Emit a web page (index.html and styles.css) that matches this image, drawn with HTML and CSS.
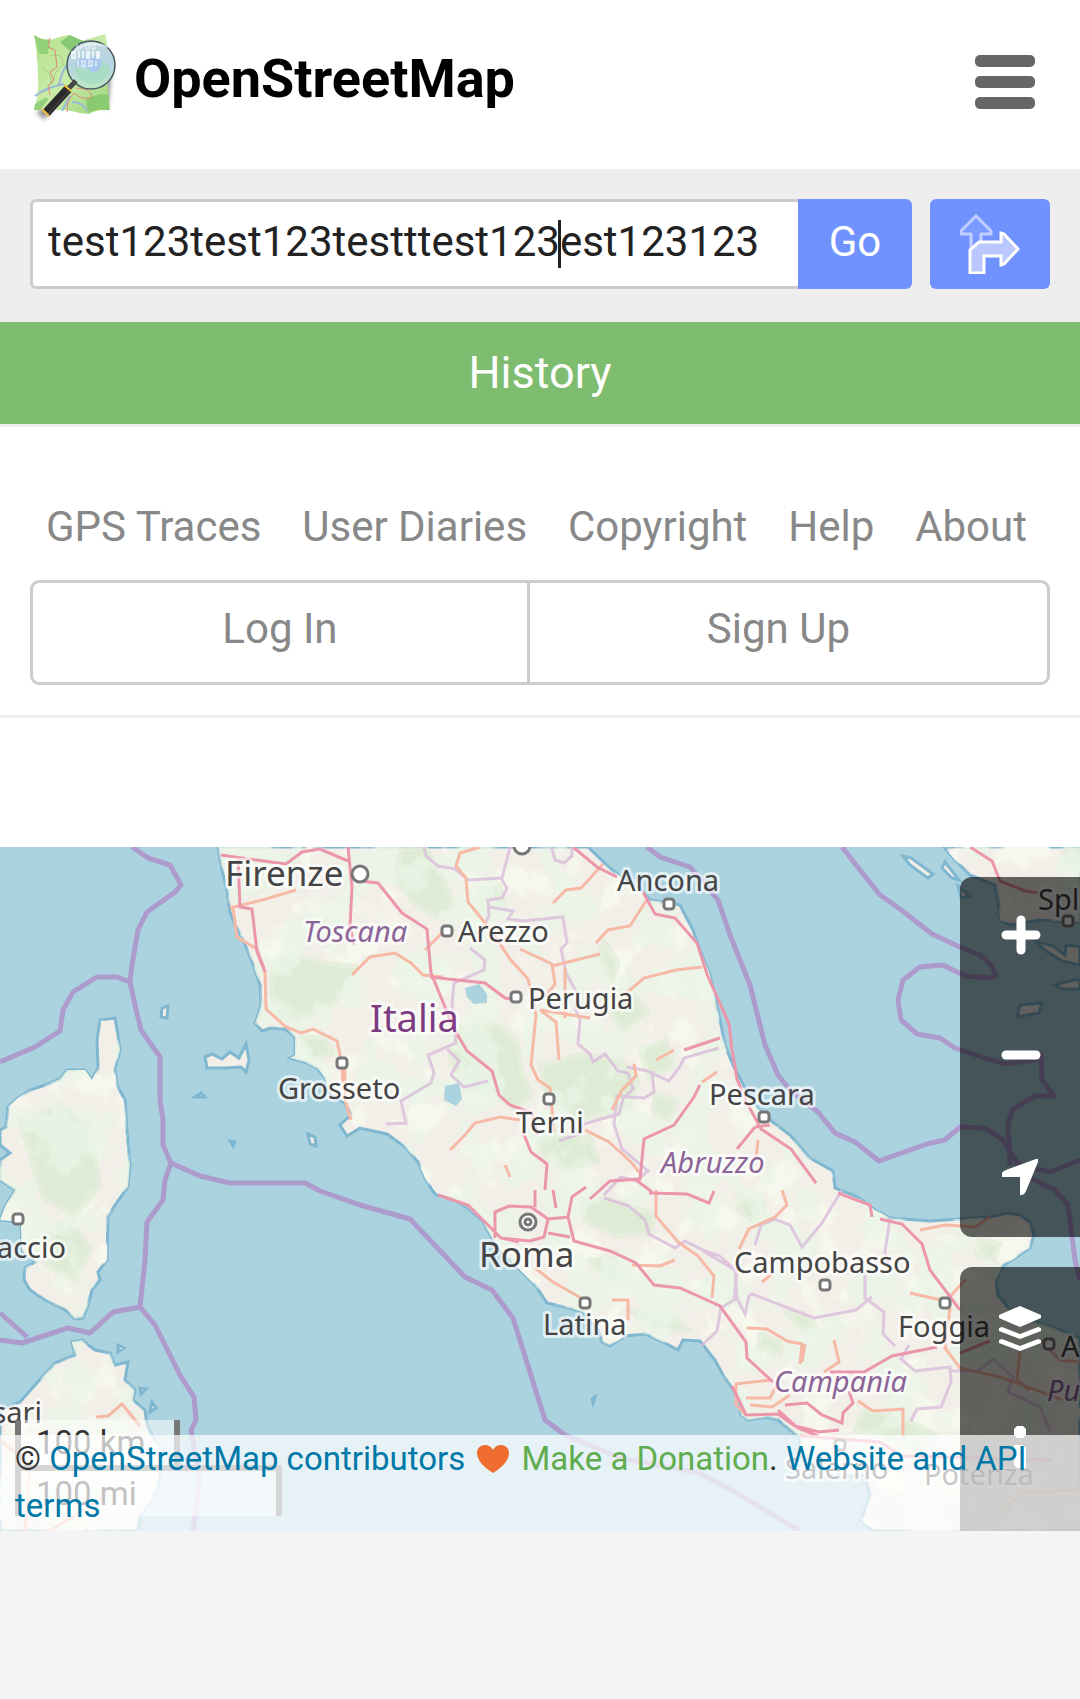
FILE: index.html
```html
<!DOCTYPE html>
<html lang="en">
<head>
<meta charset="utf-8">
<meta name="viewport" content="width=device-width">
<title>OpenStreetMap</title>
<link rel="stylesheet" href="styles.css">
</head>
<body>
<header class="header">
  <h1 class="brand"><a class="brand-link" href="#">
    <svg class="logo" viewBox="0 0 90 92" aria-hidden="true">
      <defs>
        <linearGradient id="paper" x1="0" y1="0" x2="1" y2="1"><stop offset="0" stop-color="#b4e28c"/><stop offset=".5" stop-color="#c9eba8"/><stop offset="1" stop-color="#9bd377"/></linearGradient>
        <linearGradient id="lens" x1="0" y1="0" x2="0" y2="1"><stop offset="0" stop-color="#c3d9dd"/><stop offset=".5" stop-color="#b5d4e4"/><stop offset="1" stop-color="#bde8c0"/></linearGradient>
        <filter id="soft"><feGaussianBlur stdDeviation="2"/></filter>
      </defs>
      <path d="M6 80l8 8 30-34 34 24 4-40z" fill="#000" opacity=".4" filter="url(#soft)"/>
      <path d="M4 3q11 7 20 4 10-4 16-4 10 8 18 4l17-5q5 20 3 38-1 20 2 38-12-1-21 4-12-1-22-4-18 0-33-1 5-14 4-28 0-14-1-22-1-15-3-24z" fill="url(#paper)"/>
      <path d="M30 10l10-7 13 6-10 13z" fill="#86c873"/>
      <path d="M4 3q9 6 16 4l-2 15H9zM5 72q14-10 13-4l-8 10H4z" fill="#94d07a"/>
      <path d="M56 68q12-8 23-5v15q-14-2-21 3z" fill="#8acb70"/>
      <path d="M20 24q14-4 13 9-9 5-11 20m32-35q8 8 7 14M12 35q12 8 8 18" fill="none" stroke="#a3cf83"/>
      <path d="M29 53q4-18 9-20M5 64q12-9 29-12m8 18q11 0 15 9M40 64l-8 15" fill="none" stroke="#98b9dd" stroke-width="2"/>
      <path d="M20 6l-2 9 7 3 2 17-7 5 4 8-6 6 2 9M46 56q15 0 16 9-9 4-18-4l-6 8-1 11" fill="none" stroke="#dc8877" stroke-width="1"/>
      <circle cx="61" cy="33" r="24" fill="url(#lens)" stroke="#4c5961" stroke-width="1.5"/>
      <path d="M44 33q10 8 16 2 6-7 12-6 9 2 8 11-8 15-23 11-11-4-13-18z" fill="#a6dcc0" opacity=".8"/>
      <path d="M45 34q4-10 13-8 10-5 14 4-2 11-10 10-7-9-17-6z" fill="#a9c8ee"/>
      <path d="M42 23q12-17 36-8" fill="none" stroke="#e8f4f5" stroke-width="2" opacity=".7"/>
      <g fill="none" stroke="#fff" stroke-width="1.5"><path d="M47 17v-5M51 17v-5M56 12h3v5h-3zM62 12h3v5h-3z" opacity=".5"/><path d="M42 20h3v6h-3zM49 19v7M53 19v7M57 20h2v6h-2zM63 19v7M67 20h2v6h-2z" opacity=".95"/><path d="M48 29v5M52 29h3v5h-3zM59 29h3v5h-3zM66 29v5" opacity=".65"/></g>
      <path d="M46 49l-8 8" stroke="#464646" stroke-width="5"/>
      <path d="M38 57L16 81" stroke="#2b292a" stroke-width="9"/>
      <path d="M39 59L18 82" stroke="#555" stroke-width="1"/>
      <path d="M34 53l7 6M12 77l7 7" stroke="#f3bd36" stroke-width="2"/>
    </svg>
    <span>OpenStreetMap</span>
  </a></h1>
  <button class="menu-button" type="button" aria-label="Menu"><span></span><span></span><span></span></button>
</header>

<form class="search-bar">
  <div class="search-group">
    <div class="search-field">
      <input class="search-input" type="text" aria-label="Search" value="test123test123testttest123est123123">
      <span class="caret"></span>
    </div>
    <button class="go-button" type="button">Go</button>
  </div>
  <button class="directions-button" type="button" aria-label="Directions">
    <svg viewBox="0 0 60 60" aria-hidden="true">
      <path d="M11 36V20H1v-3L16 2l15 15v3H21v11" fill="#fff" fill-opacity=".08" stroke="#c1ceff" stroke-width="3"/>
      <path d="M10 59V36l9-8h22V19l3 1 14 15-14 15-3 1V42H24v17z" fill="#bac8ff" stroke="#fff" stroke-width="3"/>
    </svg>
  </button>
</form>

<nav class="primary-nav"><a href="#">History</a></nav>

<nav class="secondary-nav">
  <div class="nav-links">
    <a href="#">GPS Traces</a><a href="#">User Diaries</a><a href="#">Copyright</a><a href="#">Help</a><a href="#">About</a>
  </div>
  <div class="account"><a class="login" href="#">Log In</a><a class="signup" href="#">Sign Up</a></div>
</nav>

<main class="map">
  <svg class="map-canvas" viewBox="0 847 1080 684" role="img" aria-label="Map of central Italy">
    <defs>
      <path id="mainland" d="M218 847L222 870 227 890 230 912 235 925 243 940 252 962 260 985 261 1005 258 1015 255 1023 262 1031 270 1028 285 1029 295 1037V1055L290 1058 305 1062 318 1069 325 1078 330 1095 345 1103 351 1115 340 1125 347 1136 360 1128 387 1134 405 1147 418 1162 425 1178 432 1190 436 1195 455 1200 470 1210 482 1220 490 1235 500 1250 520 1270 535 1285 547 1303 565 1307 582 1312 598 1330 602 1342 610 1346 625 1336 645 1334 665 1343 678 1350 683 1340 700 1341 715 1360 722 1373 730 1385 740 1400 741 1415 748 1420 765 1417 778 1420 790 1430 800 1437 800 1455 830 1475 865 1475 870 1495 861 1520 872 1531H1080V1338L1060 1330 1030 1320 1010 1310 998 1295 996 1280 1003 1266 1030 1248 1034 1235 1030 1222 1020 1215 1008 1213 990 1217 960 1219 930 1221 890 1218 875 1210 858 1197 835 1188 833 1171 810 1158 790 1135 770 1120 757 1108 744 1086 733 1065 725 1045 720 1020 710 975 700 950 693 930 685 915 680 905 670 903 650 900 643 892 625 880 610 868 588 847Z"/>
      <path id="dalmatia" d="M944 847L955 860 970 875 995 885 998 900 1000 920 1010 925 1040 920 1080 923V847Z"/>
      <path id="corsica" d="M0 1130L6 1127 8 1107 18 1098 30 1090 48 1084 60 1079 67 1070 85 1070 92 1080 98 1068 97 1040 100 1020 115 1018 118 1035 120 1050 115 1070 117 1085 125 1100 127 1130 130 1165 128 1187 115 1205 108 1217 107 1260 98 1272 100 1280 92 1290 88 1305 83 1318 75 1319 65 1310 45 1300 30 1290 24 1280 25 1268 35 1262 22 1250 21 1222 0 1220 5 1207 15 1190 0 1180V1160L10 1153 0 1145Z"/>
      <path id="sardinia" d="M72 1342L82 1340 95 1350 110 1353 115 1365 128 1362 125 1380 135 1390 133 1400 145 1410 147 1425 155 1440 163 1452 158 1490 140 1515 138 1531H0V1410L20 1402 35 1385 55 1363 75 1355Z"/>
      <path id="islands" d="M205 1057L212 1054 222 1059 230 1052 239 1058 246 1044 249 1060 246 1072 241 1067 225 1068 207 1068ZM162 1008L168 1006 167 1018 161 1017ZM195 1097l6-4 4 4zM230 1141l5 1-2 4zM308 1134l7 3 1 9-6-2zM903 856l8 2 22 16-5 4-18-13zM945 862l14 18-7-2-10-10zM958 886l12 10-9 2zM1020 1005l22-2-3 10-22 4zM1035 941l18 5 12 9 1-10 14 2v18l-18-4-16-10zM1054 985l20-5h6v9h-18zM592 1399l3-2-2 6zM118 1345l6 3-6 4zM140 1388l6 1-5 5zM152 1402l4 6-6 4z"/>
      <clipPath id="land-clip"><use href="#mainland"/><use href="#dalmatia"/><use href="#corsica"/><use href="#sardinia"/></clipPath>
      <filter id="woods" x="0" y="0" width="1" height="1"><feTurbulence type="fractalNoise" baseFrequency=".022 .019" numOctaves="5" seed="8"/><feColorMatrix values="0 0 0 0 .82 0 0 0 0 .91 0 0 0 0 .79 9 0 0 0 -4.4"/></filter>
      <filter id="fields" x="0" y="0" width="1" height="1"><feTurbulence type="fractalNoise" baseFrequency=".03" numOctaves="4" seed="22"/><feColorMatrix values="0 0 0 0 .93 0 0 0 0 .94 0 0 0 0 .85 7 0 0 0 -3.7"/></filter>
    </defs>
    <rect y="847" width="1080" height="684" fill="#aad3df"/>
    <g class="coast"><use href="#mainland"/><use href="#dalmatia"/><use href="#corsica"/><use href="#sardinia"/><use href="#islands"/></g>
    <g clip-path="url(#land-clip)">
      <rect y="847" width="1080" height="684" filter="url(#fields)"/>
      <g class="forest" filter="url(#roughen)">
        <path d="M400 850l25-3 18 30 12 30-14 12-25-14-20-25zM272 965l20-12 30 10 35 4-8 22-20 18-30 14-20-6-8-20zM300 1036l25 2 8 16-22 6zM480 890l20-4 4 22-20 4zM458 1030l40-6 20 20 4 30 10 20-16 15-24-15-26-6-16-30zM540 1065l40-10 40 5 18 20-10 30-50 10-30-18zM640 1050l26-10 8 26-25 12zM655 1094l22 6-8 20-15-8zM540 1130l50 8 8 24-34 8-26-20zM603 940l15 22-6 20-12-24zM580 1200l20-4 55 18-4 20-35 2-30-14zM590 1260l25-2 10 28-20-6zM20 1120l40-14 30 20 10 60-26 30-30-18-14-40zM45 1232l26-12 20 30-16 30-30-16zM630 1310l40 4 20 16-34 2zM785 1312l20 2 18 22-20-4zM760 1334l20 8v12l-22-6zM865 1410l30 4 40 20-20 16-60-20zM980 1240l20 4-6 16-18-5zM1065 850h15v20l-18-10zM740 1195l24 10-4 22-22-18zM600 995l30-8 18 25-26 20z"/>
      </g>
      <rect y="847" width="1080" height="684" filter="url(#woods)" opacity=".8"/>
    </g>
    <path d="M465 988l14-4 8 10v9l-13 1-7-7zM445 1086l14-3 3 16-6 7-12-6z" fill="#aad3df"/>
    <g class="region">
      <path d="M424 847l2 9 12 10 17 3 13 11 34-2 8-30 14-5 26-1 5 18 9 3 8-7V847M502 880l5 8-5 10-14 2 1 15-6 15-8 4M489 907l24 4-5 8 15 2 40-4 4 26-6 6 5 24 12 22-3 13 5 12-2 24 12 10 3 8 12-8 13 17 10 2 5 16-10 10-4 15-35 10-5 10-20 7M470 948l15 12-1 10-30 13-2 20 4 40-28 12 6 18-3 10-30 18 5 22-20 1M447 1049l12 12-8 14 13 12 24-6M627 1067l20 4 22 10 10-13 5-10 35-10M652 1071l2 21-10 6-27-2-3 28 8 25 26 22-12 10-15-4-17 18"/>
      <path d="M604 1198l25 8 16 14 4 14 26 14 10-7 20 10 15 5M720 1256l15 14 2 28-16 10-4 23-16 15M703 1251l34 20-3 30M737 1298l8 16 4-18 3-2 62 24 42-8 16-13M755 1245l6-20 14-6 15 6 12 22 20-24 20-33M890 1218l-5 34 4 15M865 1272v26l19 14-1 22 12 12M909 1345l-8 14 14 12 35-4 1 15-10 25-24 2-6 12M950 1371h28l15-12 20 18-5 15 32 15 10 24"/>
    </g>
    <g class="minor">
      <path d="M480 847l-20 6-4 13 10 12 2 24 22 27 20 30 18 20 8 36-5 50 7 15 12 8 4 44M230 908l36-9 30-9M233 908l4 29 20 12 8 22 1 38 20 18 15 6 12-4 24 12 5 23 1 20M345 1060v40l6 20M352 975l18-18 25-4 16 10 12 12 20 2M425 950l20-20M553 903l13-13 15-2 22-24M596 943l12-13 22-4 16-25M624 995l20-17 32-8 26-3M520 949l32 15 3 20-10 13M552 966l48-12M540 1010l16 12 3 38M540 1010l50 8M565 968v50M450 1150l15-15 10-12 25-6 20 3M585 1130l24 12 22 20 8 10M505 1165l5 12M656 1060l18-10M612 1110l10-20 14-14-2-12M702 1082l15-10M758 1140l-2 20"/>
      <path d="M535 1268l18 14 28 16M656 1190v26l22 26 20 14 16 20-2 22M632 1265l28 1 15-6M612 1300h16v20M782 1190l5 15-12 12-26 12-10 20M772 1274l-10 8M747 1328l20 1 20 12 15 3-2 20M735 1384l36-4M736 1385v20l10 10M746 1398h24l8-15M750 1405l22 2 18-12M910 1293l36 8 20-22M950 1308l-5 40 15 20 43 10 60 22M1020 1350l-3 30 12 10M1040 1340l20 20 20 2M805 1344l-3 18M834 1340l5 22-15 10M858 1401l15 10 30-2v28M0 1440l30 25-5 66M50 1531l40-25 18-12M96 1417l12-1 14-12 18 22M920 1230l25-5 30 2 15-10M1003 1510l20-18 57-2"/>
    </g>
    <g class="motorway">
      <path d="M221 855l35 5 30 4 16-12 18-3 28 12M348 847l4 40-2 40 4 18M360 881l18 2 24 30 25 16 4 44 14 34 8 20 14 24 25 20 7 24 11 10 22 8 5 22 M523 1132l8 20 16 12-2 26M573 847l24 20 20 10M643 892l12 22 20 4 22 25 10 31 22 50 3 25 5 30 9 22 15 28 30 20 25 34M238 857l2 50 12 2 5 43 8 20M430 977l55 6 20 15 15 2M720 1038l-36 12M700 1085l-6 12-20 28-30 14-4 40-30 2-20 18M636 1180l16 12M755 1127l-18 22M755 1127l15-2"/>
      <path d="M438 1195l30 10 18 18 15 15 18 4M495 1238v-26l14-6 22 1 17 12-4 18-14 4-30-3M535 1190v17M553 1190l3 18M548 1219l20-2 4-20 14-10M548 1233l22 4M568 1217l6 24 36 10 26 12 18 22 26 3 40 18 26 36 1 16 26 24M649 1193l38 1 22 9 5-12M838 1193l32 12 2 12M880 1219l22 5 20 20 8 26 30 40M830 1372h34l28-16 45-9M732 1386l14 29 32-1 17 12 24 6 20-2M785 1405l22-2 15 12 20 8 1-10 10-10-4-12M778 1410l20 18 20 8M800 1436l80 6 22 14 150 4M970 847l22 14 8 20 25 10 14 2M960 1353l30-12"/>
    </g>
    <g class="marine">
      <path d="M132 847L148 858 170 865 181 885 175 892 147 912 138 930 132 965 130 982 135 1005 141 1030 160 1057V1100L163 1120V1145L171 1163 200 1176 230 1183H305L320 1191 360 1205 410 1219 465 1277 492 1290 513 1318 545 1420 565 1435 620 1458 700 1473 740 1495 800 1531"/>
      <path d="M0 1062L35 1047 60 1031 63 1010 73 992 97 977H117L130 982M171 1163L165 1180 163 1200 147 1222 145 1260 140 1307 155 1325 180 1375 194 1397 196 1420 191 1430 200 1480 193 1531M0 1340L22 1343 68 1328 90 1333 113 1312 140 1307M0 1313L27 1337"/>
      <path d="M647 847L660 857 690 867 718 900 730 935 750 985 765 1045 778 1075 790 1090 818 1112 835 1133 855 1142 879 1161 927 1144 945 1140 960 1127 985 1128 1003 1140 1012 1155 1030 1178 1055 1190 1068 1205 1075 1260 1080 1280"/>
      <path d="M842 847L860 870 880 895 900 909 932 934 960 947 980 955 991 965 996 975 990 978 965 976 943 965 920 967 903 980 898 1000 901 1020 917 1034 940 1038 955 1048 985 1058 1005 1064 1035 1060 1041 1055 1042 1080 1054 1096 1035 1096 1012 1110 1008 1125 1010 1165M1015 1163L1050 1172 1080 1160"/>
    </g>
    <g class="towns">
      <circle cx="360" cy="874" r="8"/><circle cx="522" cy="846" r="8"/>
      <rect x="442" y="926" width="10" height="10" rx="3"/><rect x="511" y="992" width="10" height="10" rx="3"/><rect x="664" y="899" width="10" height="10" rx="3"/><rect x="337" y="1058" width="10" height="10" rx="3"/><rect x="544" y="1094" width="10" height="10" rx="3"/><rect x="759" y="1112" width="10" height="10" rx="3"/><rect x="580" y="1298" width="10" height="10" rx="3"/><rect x="820" y="1280" width="10" height="10" rx="3"/><rect x="940" y="1298" width="10" height="10" rx="3"/><rect x="13" y="1214" width="10" height="10" rx="3"/><rect x="1063" y="916" width="10" height="10" rx="3"/><rect x="1044" y="1339" width="10" height="10" rx="3"/><rect x="835" y="1440" width="10" height="10" rx="3"/>
      <circle cx="528" cy="1222" r="8"/><circle cx="528" cy="1222" r="3"/>
    </g>
    <g class="city">
      <text class="large" x="225" y="886">Firenze</text><text x="458" y="942">Arezzo</text><text x="528" y="1009">Perugia</text><text x="617" y="891">Ancona</text><text x="278" y="1099">Grosseto</text><text x="516" y="1133">Terni</text><text x="709" y="1105">Pescara</text><text class="large" x="479" y="1267">Roma</text><text x="543" y="1335">Latina</text><text x="734" y="1273">Campobasso</text><text x="898" y="1337">Foggia</text><text x="785" y="1479">Salerno</text><text x="924" y="1485">Potenza</text><text x="66" y="1258" text-anchor="end">accio</text><text x="42" y="1423" text-anchor="end">sari</text><text x="1038" y="910">Spl</text><text x="1061" y="1357">A</text>
    </g>
    <g class="area"><text x="303" y="942">Toscana</text><text x="661" y="1173">Abruzzo</text><text x="774" y="1392">Campania</text><text x="1047" y="1401">Pu</text><text class="country" x="370" y="1032">Italia</text></g>
  </svg>

  <div class="controls">
    <div class="control-group">
      <button type="button" aria-label="Zoom in"><svg viewBox="0 0 60 60"><path d="M16 28h30M31 13v30" fill="none" stroke="#fff" stroke-width="9" stroke-linecap="round"/></svg></button>
      <button type="button" aria-label="Zoom out"><svg viewBox="0 0 60 60"><path d="M16 28h30" fill="none" stroke="#fff" stroke-width="9" stroke-linecap="round"/></svg></button>
      <button type="button" aria-label="Show my location"><svg viewBox="0 0 60 60"><path d="M12 26q1-2 4-3L46 12h2v3L36 44q-1 3-4 4h-2V30H12z" fill="#fff"/></svg></button>
    </div>
    <div class="control-group">
      <button type="button" aria-label="Layers"><svg viewBox="0 0 60 60"><g fill="#fff"><path d="M30 9l21 9v3L30 30 9 21v-3z"/><path d="M9 31l3-1 18 7 18-7 3 1v3L30 42 9 34zM9 43l3-1 18 7 18-7 3 1v3L30 54 9 46z"/></g></svg></button>
      <button type="button" aria-label="Map key"><svg viewBox="0 0 60 60"><path d="M27 9h6l3 3v6l-3 3h-6l-3-3v-6zM24 28h9l3 3v20h-9l-3-3z" fill="#fff"/></svg></button>
    </div>
  </div>
  <div class="scale"><div class="scale-km">100 km</div><div class="scale-mi">100 mi</div></div>
  <div class="attribution">© <a href="#">OpenStreetMap contributors</a> <svg class="heart" viewBox="0 0 34 30" aria-hidden="true"><path d="M17 29C9 24 1 17 1 9c0-9 12-11 16-3 4-8 16-6 16 3 0 8-8 15-16 20z" fill="#ee6d2f"/></svg> <a class="donate" href="#">Make a Donation</a>. <a href="#">Website and API terms</a></div>
</main>
</body>
</html>
```
FILE: styles.css
```css
* { box-sizing: border-box; }

body {
  margin: 0;
  background: #f4f4f4;
  color: #222;
  font: 42px/60px Roboto, sans-serif;
}

a { color: inherit; text-decoration: none; }

button {
  margin: 0;
  padding: 0;
  border: 0;
  background: none;
  color: #fff;
  font: inherit;
}

button svg { display: block; width: 60px; height: 60px; }

/* Header */
.header {
  display: flex;
  align-items: center;
  justify-content: space-between;
  padding: 30px 45px 45px 30px;
  background: #fff;
}

.brand { margin: 0; font-size: 54px; font-weight: 700; line-height: 90px; color: #000; }
.brand-link { display: flex; align-items: flex-end; gap: 14px; height: 94px; }
.logo { width: 90px; height: 92px; }

.menu-button { display: grid; gap: 9px; padding-top: 9px; }
.menu-button span { width: 60px; height: 12px; border-radius: 5px; background: #666; }

/* Search */
.search-bar { display: flex; gap: 18px; padding: 30px 30px 33px; background: #eee; }
.search-group { display: flex; flex: 1; }
.search-field { position: relative; flex: 1; }

.search-input {
  display: block;
  width: 100%;
  height: 90px;
  padding: 0 15px 6px;
  border: 3px solid #ccc;
  border-right: 0;
  border-radius: 6px 0 0 6px;
  outline: 0;
  background: #fff;
  color: #222;
  font: inherit;
}

.caret { position: absolute; top: 21px; left: 528px; width: 3px; height: 48px; background: #222; }

.go-button,
.directions-button { height: 90px; background: #7092ff; }
.go-button { width: 114px; padding-bottom: 4px; border-radius: 0 6px 6px 0; }
.directions-button { width: 120px; padding-left: 30px; border-radius: 6px; }

/* Navigation */
.primary-nav { border-bottom: 3px solid #eee; background: #7ebc6f; color: #fff; font-size: 45px; text-align: center; }
.primary-nav a { display: block; padding: 21px; }

.secondary-nav { padding: 70px 30px 30px; border-bottom: 3px solid #eee; background: #fff; color: #888; }
.nav-links { display: flex; justify-content: space-between; padding: 0 23px 23px 16px; }

.account { display: flex; border: 3px solid #ccc; border-radius: 9px; text-align: center; }
.account a { padding: 16px 0 23px; }
.account .login { width: 49%; border-right: 3px solid #ccc; }
.account .signup { flex: 1; padding-right: 20px; }

/* Map */
.map { position: relative; padding-top: 129px; overflow: hidden; background: #fff; }
.map-canvas { display: block; width: 100%; height: auto; font-family: "Noto Sans", sans-serif; font-size: 29px; }

.coast { fill: #f2efe9; stroke: #80b7d0; stroke-width: 3; }
.forest { fill: #d9ead0; stroke: #e3edd9; stroke-width: 5; stroke-linejoin: round; opacity: .8; }
.region { fill: none; stroke: #d9bddb; stroke-width: 3; opacity: .8; }
.minor { fill: none; stroke: #f6b9a6; stroke-width: 3; }
.motorway { fill: none; stroke: #ec96ab; stroke-width: 3; }
.marine { fill: none; stroke: #ac9bcc; stroke-width: 5; stroke-linejoin: round; }
.towns { fill: #fff; stroke: #777; stroke-width: 3; }
.city, .area { fill: #444; stroke: rgba(255, 255, 255, .65); stroke-width: 6px; stroke-linejoin: round; paint-order: stroke; }
.area { fill: #8c6598; font-style: italic; }
.large { font-size: 35px; }
.country { fill: #7d3b82; font-size: 38px; font-style: normal; }

.controls { position: absolute; top: 159px; right: 0; display: grid; gap: 30px; }
.control-group { border-radius: 12px 0 0 12px; background: rgba(0, 0, 0, .6); }
.control-group button { display: grid; place-items: center; width: 120px; height: 120px; }
.control-group:last-child { height: 300px; }

.scale { position: absolute; left: 15px; bottom: 15px; color: #333; font-size: 33px; line-height: 45px; }
.scale div { padding: 0 15px; border: 6px solid #777; background: rgba(255, 255, 255, .5); }
.scale .scale-km { width: 165px; border-top: 0; }
.scale .scale-mi { width: 267px; margin-top: -6px; border-bottom: 0; }

.attribution {
  position: absolute;
  right: 0;
  bottom: 0;
  left: 0;
  padding: 0 15px 2px;
  background: rgba(255, 255, 255, .7);
  color: #333;
  font-size: 33px;
  line-height: 47px;
}
.attribution a { color: #0078a8; }
.attribution .donate { color: #60ac4e; }
.heart { width: 34px; height: 30px; vertical-align: -4px; margin: 0 3px; }
```
